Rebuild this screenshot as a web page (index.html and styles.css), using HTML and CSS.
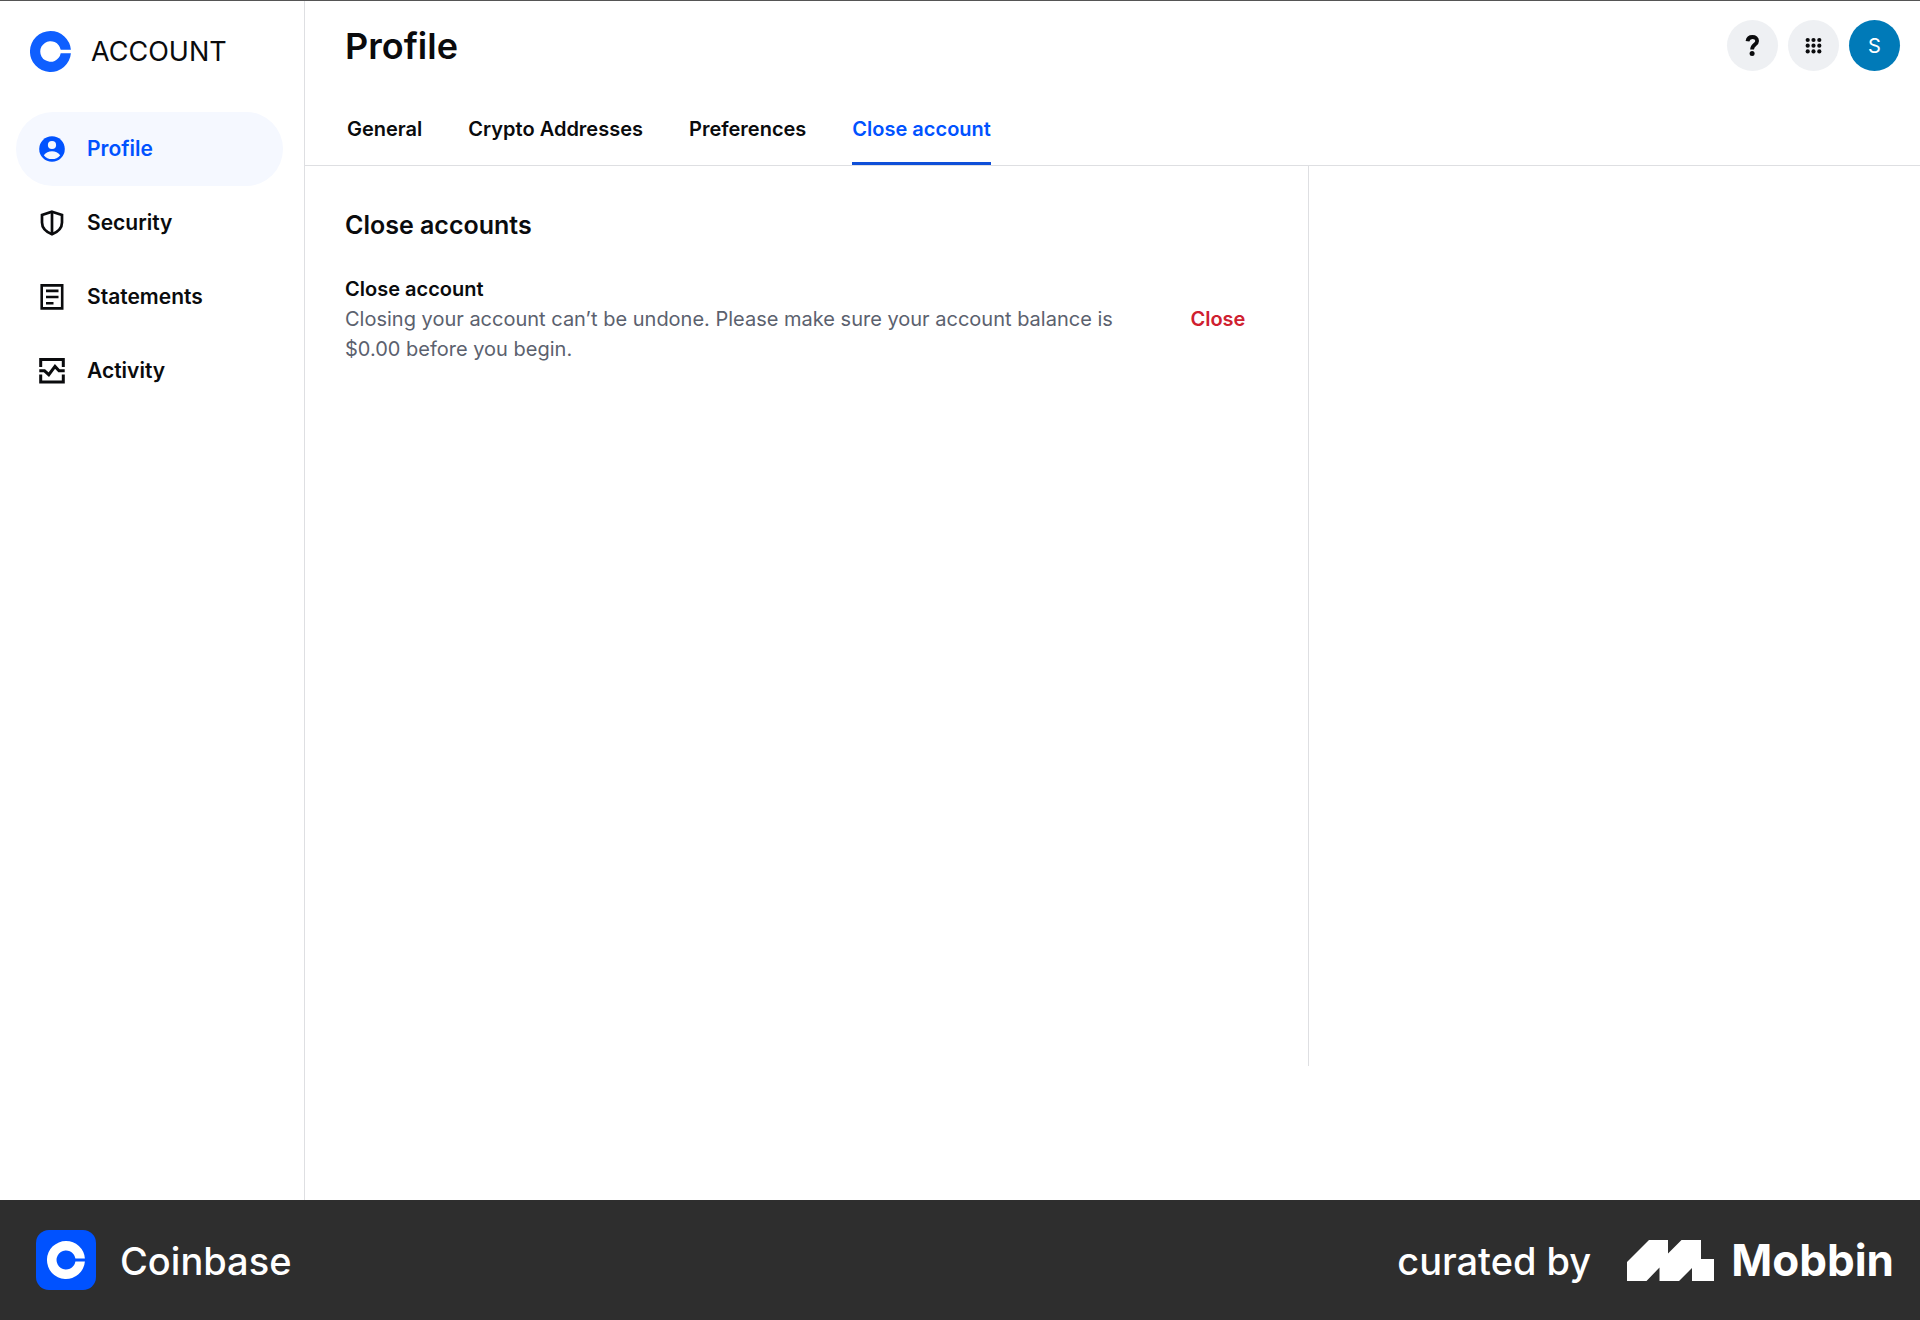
FILE: index.html
```html
<!DOCTYPE html>
<html lang="en">
<head>
<meta charset="utf-8">
<meta name="viewport" content="width=device-width, initial-scale=1">
<title>Profile – Close account</title>
<link rel="stylesheet" href="styles.css">
</head>
<body>
<div class="app">
  <aside class="sidebar">
    <a class="brand" href="#">
      <svg class="brand-mark" viewBox="0 0 41 41" aria-hidden="true"><path fill="#0f5fff" d="M20.500 0A20.500 20.500 0 0 1 40.900 18.800H30.700A10.300 10.300 0 1 0 30.700 22.200H40.900A20.500 20.500 0 1 1 20.500 0Z"/></svg>
      <span>ACCOUNT</span>
    </a>
    <nav class="side-nav" aria-label="Account">
      <a class="side-link is-active" href="#" aria-current="page">
        <svg class="side-icon" viewBox="0 0 26 26" aria-hidden="true"><circle cx="13" cy="13" r="12.800" fill="#0052ff"/><circle cx="13" cy="9" r="4.100" fill="#f5f8ff"/><path fill="#f5f8ff" d="M4.800 19.200C6.800 16.500 9.700 15.200 13 15.200s6.200 1.300 8.200 4c-2 2.500-4.900 3.900-8.200 3.900s-6.200-1.400-8.200-3.900Z"/></svg>
        <span>Profile</span>
      </a>
      <a class="side-link" href="#">
        <svg class="side-icon" viewBox="0 0 26 26" fill="none" stroke="currentColor" stroke-width="2.700" aria-hidden="true"><path d="M13 1.700 23 5v7.500c0 5-3.600 9.200-10 11.800C6.600 21.700 3 17.500 3 12.500V5Z"/><path d="M13 1.700v22.600"/></svg>
        <span>Security</span>
      </a>
      <a class="side-link" href="#">
        <svg class="side-icon" viewBox="0 0 26 26" fill="none" stroke="currentColor" stroke-width="2.600" aria-hidden="true"><path d="M2.700 1.400h20.500v23H2.700ZM7 6.900h12.500M7 13h12.500M7 19.200h7.500"/></svg>
        <span>Statements</span>
      </a>
      <a class="side-link" href="#">
        <svg class="side-icon" viewBox="0 0 26 26" fill="none" stroke="currentColor" stroke-width="3" aria-hidden="true"><path d="M1.700 9V1.500h22.600V9M1.700 16.600v7.500h22.600v-7.500M.3 12.800h5.200l4.300 3.900 6.200-8.300 4 4.400h5.700"/></svg>
        <span>Activity</span>
      </a>
    </nav>
  </aside>
  <div class="page">
    <header class="page-header">
      <div class="title-row">
        <h1>Profile</h1>
        <div class="actions">
          <button class="round-button" type="button" aria-label="Help"><svg viewBox="0 0 51 51" fill="none" aria-hidden="true"><path stroke="#0a0b0d" stroke-width="3.800" d="M20.500 21.200c.4-2.700 2.200-4.200 4.900-4.200 2.800 0 4.700 1.500 4.700 3.900 0 3.900-5 3.300-5 8.600"/><circle cx="25.100" cy="33.600" r="2.500" fill="#0a0b0d"/></svg></button>
          <button class="round-button" type="button" aria-label="Apps"><svg viewBox="0 0 51 51" fill="#0a0b0d" aria-hidden="true"><circle cx="19.700" cy="20" r="2.100"/><circle cx="25.500" cy="20" r="2.100"/><circle cx="31.300" cy="20" r="2.100"/><circle cx="19.700" cy="25.700" r="2.100"/><circle cx="25.500" cy="25.700" r="2.100"/><circle cx="31.300" cy="25.700" r="2.100"/><circle cx="19.700" cy="31.400" r="2.100"/><circle cx="25.500" cy="31.400" r="2.100"/><circle cx="31.300" cy="31.400" r="2.100"/></svg></button>
          <button class="round-button avatar" type="button">S</button>
        </div>
      </div>
      <nav class="tabs" aria-label="Profile sections">
        <a class="tab" href="#">General</a>
        <a class="tab" href="#">Crypto Addresses</a>
        <a class="tab" href="#">Preferences</a>
        <a class="tab is-active" href="#" aria-current="page">Close account</a>
      </nav>
    </header>
    <div class="columns">
      <main class="content">
        <h2>Close accounts</h2>
        <section class="setting">
          <div class="setting-text">
            <h3>Close account</h3>
            <p>Closing your account can’t be undone. Please make sure your account balance is $0.00 before you begin.</p>
          </div>
          <button class="danger-link" type="button">Close</button>
        </section>
      </main>
    </div>
  </div>
</div>
<footer class="credit-bar">
  <div class="credit-app">
    <svg class="app-tile" viewBox="0 0 60 60" aria-hidden="true"><rect width="60" height="60" rx="13" fill="#0052ff"/><path fill="#fff" d="M30 11A19 19 0 0 1 48.900 28.500H39.400A9.500 9.500 0 1 0 39.400 31.500H48.900A19 19 0 1 1 30 11Z"/></svg>
    <span class="credit-text">Coinbase</span>
  </div>
  <div class="credit-by">
    <span class="credit-text">curated by</span>
    <a class="mobbin" href="#">
      <svg class="mobbin-mark" viewBox="0 0 87 41" aria-hidden="true"><path fill="#fff" d="M0 22 22 0H41V13.500L54.500 0H74V19H87V41H65V28L52 41H32.500V27.500L19.500 41H0Z"/></svg>
      <span>Mobbin</span>
    </a>
  </div>
</footer>
</body>
</html>
```
FILE: styles.css
```css
* {
  box-sizing: border-box;
}

body {
  display: flex;
  flex-direction: column;
  min-height: 100vh;
  margin: 0;
  color: #0a0b0d;
  background: #fff;
  font-family: Inter, "Liberation Sans", sans-serif;
  font-size: 20px;
  line-height: 30px;
}

h1, h2, h3, p {
  margin: 0;
}

h1, h2, h3 {
  font-weight: 600;
}

a {
  color: inherit;
  text-decoration: none;
}

button {
  padding: 0;
  border: 0;
  background: none;
  color: inherit;
  font: inherit;
  cursor: pointer;
}

svg {
  display: block;
}

.app {
  display: flex;
  flex: 1;
  border-top: 1px solid #555;
}

.sidebar {
  flex: none;
  width: 305px;
  padding: 30px 21px 0 16px;
  border-right: 1px solid #dedfe2;
}

.brand {
  display: flex;
  align-items: center;
  gap: 20px;
  margin-bottom: 40px;
  padding-left: 14px;
  font-size: 27px;
}

.brand-mark {
  width: 41px;
  height: 41px;
}

.side-link {
  display: flex;
  align-items: center;
  gap: 22px;
  height: 74px;
  padding-left: 23px;
  border-radius: 37px;
  font-size: 21px;
  font-weight: 600;
}

.side-link.is-active {
  color: #0052ff;
  background: #f5f8ff;
}

.side-icon {
  width: 26px;
  height: 26px;
}

.page {
  flex: 1;
  min-width: 0;
}

.page-header {
  padding: 19px 20px 0 40px;
  border-bottom: 1px solid #dedfe2;
}

.title-row {
  display: flex;
  align-items: center;
  justify-content: space-between;
}

h1 {
  font-size: 36px;
  line-height: 44px;
}

.actions {
  display: flex;
  gap: 10px;
}

.round-button {
  width: 51px;
  height: 51px;
  border-radius: 50%;
  background: #eef0f3;
}

.avatar {
  color: #fff;
  background: #007ab8;
}

.tabs {
  display: flex;
  gap: 46px;
  margin-top: 43px;
  padding-left: 2px;
}

.tab {
  padding-bottom: 18px;
  border-bottom: 3px solid transparent;
  font-weight: 600;
}

.tab.is-active {
  color: #0052ff;
  border-color: #0f4fd8;
}

.columns {
  display: grid;
  grid-template-columns: 1.645fr 1fr;
}

.content {
  min-height: 900px;
  padding: 41px 63px 0 40px;
  border-right: 1px solid #dedfe2;
}

h2 {
  margin-bottom: 31px;
  font-size: 25px;
  line-height: 36px;
}

h3 {
  font-size: 20px;
}

.setting {
  display: flex;
  align-items: center;
  gap: 56px;
}

.setting-text {
  flex: 1;
}

.setting p {
  color: #5b616e;
}

.danger-link {
  color: #cf202f;
  font-weight: 600;
}

.credit-bar {
  display: flex;
  align-items: center;
  justify-content: space-between;
  height: 120px;
  padding: 0 26px 0 36px;
  color: #fff;
  background: #2e2e2e;
  font-size: 38px;
  font-weight: 500;
  line-height: 48px;
}

.credit-app,
.credit-by,
.mobbin {
  display: flex;
  align-items: center;
}

.credit-app {
  gap: 24px;
}

.credit-by {
  gap: 36px;
}

.credit-text {
  padding-top: 2px;
}

.mobbin {
  gap: 17px;
  font-size: 44px;
  font-weight: 700;
}

.app-tile {
  width: 60px;
  height: 60px;
}

.mobbin-mark {
  width: 87px;
  height: 41px;
}
```
